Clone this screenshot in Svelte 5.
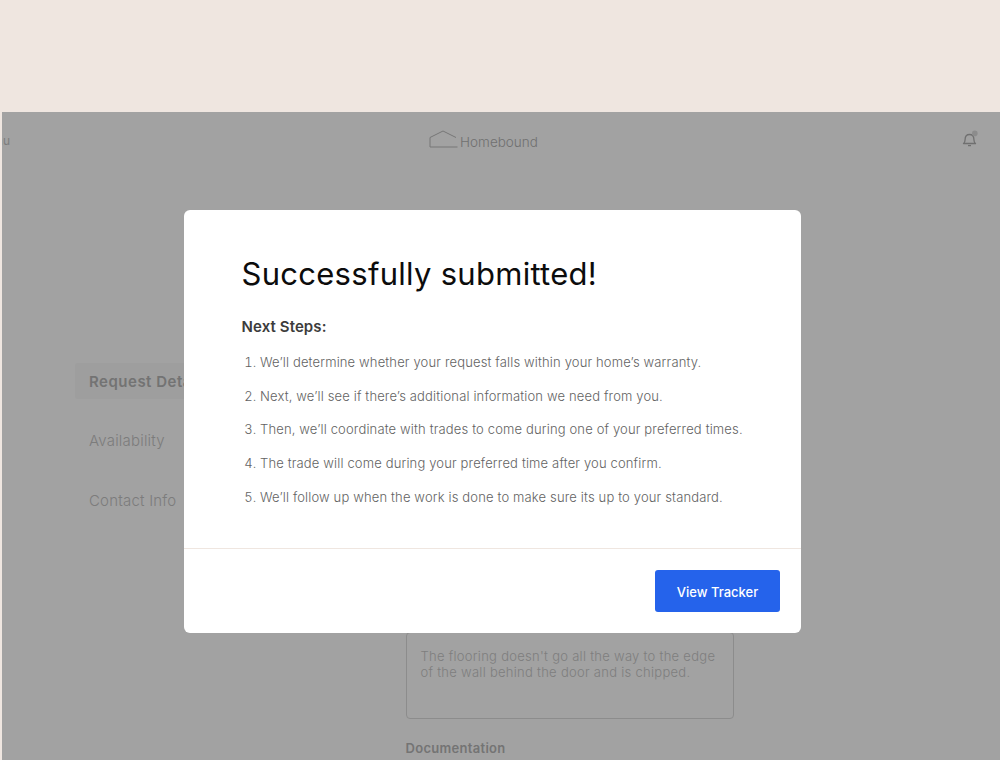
<script lang="ts">
    const steps = [
        "We’ll determine whether your request falls within your home’s warranty.",
        "Next, we’ll see if there’s additional information we need from you.",
        "Then, we’ll coordinate with trades to come during one of your preferred times.",
        "The trade will come during your preferred time after you confirm.",
        "We’ll follow up when the work is done to make sure its up to your standard."
    ];
    const navItems = ["Request Details", "Availability", "Contact Info"];
</script>

<div class="page">
    <div class="app">
        <header class="topbar">
            <span class="menu">Menu</span>
            <div class="logo">
                <svg width="30" height="18" viewBox="0 0 30 18" fill="none">
                    <path d="M28.5 17H1V7.5L14 1l13 6.5" stroke="#777" stroke-width="1" />
                </svg>
                <span>Homebound</span>
            </div>
            <svg class="bell" width="18" height="18" viewBox="0 0 18 18" fill="none">
                <path d="M2.5 13.5c1.2-1 1.6-2 1.6-4 0-3 1.8-5 4.4-5s4.4 2 4.4 5c0 2 .4 3 1.6 4z" stroke="#707070" stroke-width="1.3" stroke-linejoin="round" />
                <path d="M7 15.6h3" stroke="#707070" stroke-width="1.3" />
                <circle cx="13.8" cy="3.4" r="2.8" fill="#8c8c8c" />
            </svg>
        </header>

        <div class="content">
            <nav class="sidenav">
                {#each navItems as item, i}
                    <div class="nav-item" class:active={i === 0}>{item}</div>
                {/each}
            </nav>
            <div class="form">
                <div class="textarea">The flooring doesn't go all the way to the edge of the wall behind the door and is chipped.</div>
                <div class="form-label">Documentation</div>
            </div>
        </div>

        <div class="modal">
            <div class="modal-body">
                <h1>Successfully submitted!</h1>
                <h2>Next Steps:</h2>
                <ol>
                    {#each steps as step}
                        <li>{step}</li>
                    {/each}
                </ol>
            </div>
            <div class="modal-footer">
                <button>View Tracker</button>
            </div>
        </div>
    </div>
</div>

<style>
    :global(body) {
        background: #efe6e0;
        font-family: "Inter", "Liberation Sans", sans-serif;
    }

    .page {
        height: 760px;
        padding: 112px 0 0 2px;
        box-sizing: border-box;
        overflow: hidden;
    }

    .app {
        position: relative;
        height: 648px;
        background: #a2a2a2;
        overflow: hidden;
    }

    .topbar {
        display: flex;
        align-items: flex-start;
        justify-content: space-between;
        height: 60px;
        padding: 18px 21px 0 0;
        box-sizing: border-box;
    }

    .menu {
        width: 8px;
        margin-top: 3px;
        direction: rtl;
        overflow: hidden;
        font-size: 12px;
        line-height: 15px;
        color: #7d7d7d;
    }

    .logo {
        display: flex;
        align-items: flex-end;
        gap: 1px;
        margin-right: 4px;
        font-size: 13.5px;
        font-weight: 300;
        line-height: 17px;
        color: #707070;
    }

    .logo span {
        margin-bottom: -3px;
    }

    .content {
        display: flex;
        padding: 191px 0 0 73px;
    }

    .sidenav {
        display: flex;
        flex-direction: column;
        width: 330.5px;
        flex-shrink: 0;
        font-size: 15px;
        font-weight: 300;
        letter-spacing: 0.2px;
        color: #7c7c7c;
    }

    .nav-item {
        height: 36px;
        line-height: 36px;
        padding-left: 14px;
        margin-bottom: 24px;
    }

    .nav-item.active {
        width: 150px;
        line-height: 38px;
        background: #9e9e9e;
        border-radius: 3px;
        font-weight: 600;
        letter-spacing: 0.5px;
        color: #737373;
    }

    .form {
        width: 328px;
        padding-top: 269px;
    }

    .textarea {
        height: 87px;
        padding: 15px 14px;
        box-sizing: border-box;
        border: 1px solid #8c8c8c;
        border-radius: 4px;
        font-size: 13px;
        font-weight: 300;
        letter-spacing: 0.28px;
        line-height: 16px;
        color: #7e7e7e;
    }

    .form-label {
        margin-top: 21px;
        font-size: 13px;
        font-weight: 600;
        letter-spacing: 0.3px;
        color: #747474;
    }

    .modal {
        position: absolute;
        top: 97.5px;
        left: 182px;
        width: 617px;
        height: 423.5px;
        display: flex;
        flex-direction: column;
        background: #fff;
        border-radius: 6px;
    }

    .modal-body {
        height: 339px;
        padding: 44.5px 57.5px 0;
        box-sizing: border-box;
        border-bottom: 1px solid #efe6e0;
    }

    h1 {
        margin: 0;
        font-size: 31px;
        line-height: 40px;
        font-weight: 400;
        letter-spacing: 0.28px;
        color: #0c0c0c;
    }

    h2 {
        margin: 23px 0 0;
        font-size: 15px;
        line-height: 20px;
        font-weight: 600;
        letter-spacing: 0.1px;
        color: #3c3c3c;
    }

    ol {
        margin: 16px 0 0;
        padding: 0 0 0 18.5px;
        font-size: 13px;
        font-weight: 350;
        line-height: 18px;
        letter-spacing: 0.15px;
        color: #636363;
    }

    li {
        margin-bottom: 15.7px;
    }

    .modal-footer {
        display: flex;
        justify-content: flex-end;
        padding: 21.5px 21px 0 0;
    }

    button {
        width: 125px;
        height: 42px;
        padding-top: 2px;
        border: none;
        border-radius: 3px;
        background: #2563eb;
        color: #fff;
        font-family: inherit;
        font-size: 13px;
        font-weight: 500;
    }
</style>
